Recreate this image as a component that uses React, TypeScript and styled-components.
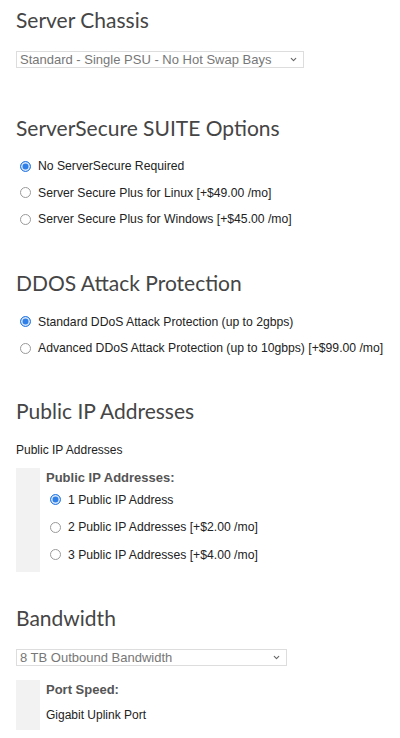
import React from "react";
import styled, { createGlobalStyle } from "styled-components";
import { ChevronDown } from "lucide-react";

const GlobalStyle = createGlobalStyle`
    html, body {
        margin: 0;
        padding: 0;
        background: #fff;
    }
    body {
        font-family: "Liberation Sans", Arial, sans-serif;
        color: #222;
    }
`;

const Page = styled.div`
    padding: 0 16px;
    width: 400px;
    box-sizing: border-box;
`;

const Section = styled.section<{ $top: number }>`
    margin-top: ${({ $top }) => $top}px;
`;

const Heading = styled.h3<{ $gap: number }>`
    font-family: Lato, "Open Sans", sans-serif;
    font-weight: 400;
    font-size: 21px;
    line-height: 24px;
    color: #454545;
    margin: 0 0 ${({ $gap }) => $gap}px;
`;

const SelectWrap = styled.div<{ $width: number }>`
    position: relative;
    width: ${({ $width }) => $width}px;
`;

const Select = styled.select`
    appearance: none;
    width: 100%;
    height: 17px;
    box-sizing: border-box;
    border: 1px solid #ddd;
    border-radius: 0;
    background: #fff;
    padding: 0 0 0 3px;
    font-family: "Liberation Sans", Arial, sans-serif;
    font-size: 13px;
    line-height: 15px;
    color: #777;
    outline: none;
`;

const Chevron = styled(ChevronDown)`
    position: absolute;
    right: 6px;
    top: 5px;
    width: 9px;
    height: 9px;
    color: #666;
    pointer-events: none;
`;

const OptionRow = styled.label<{ $height: number }>`
    display: flex;
    align-items: center;
    height: ${({ $height }) => $height}px;
    padding-left: 4px;
    font-size: 12.2px;
    color: #222;
    cursor: pointer;
`;

const Radio = styled.input.attrs({ type: "radio" })`
    appearance: none;
    flex: none;
    width: 11px;
    height: 11px;
    margin: 0 7px 0 0;
    border: 1px solid #9a9a9a;
    border-radius: 50%;
    background: #fff;
    box-sizing: border-box;

    &:checked {
        border-color: #2f7fe8;
        background: #2f7fe8;
        box-shadow: inset 0 0 0 1.5px #dbe8fb;
    }
`;

const Caption = styled.div<{ $gap: number }>`
    font-size: 12px;
    line-height: 16px;
    color: #222;
    margin-bottom: ${({ $gap }) => $gap}px;
`;

const Panel = styled.div<{ $pt: number; $pb: number; $mt?: number }>`
    border-left: 24px solid #f2f2f2;
    margin-top: ${({ $mt }) => $mt ?? 0}px;
    padding: ${({ $pt, $pb }) => `${$pt}px 0 ${$pb}px 6px`};
`;

const PanelTitle = styled.div`
    font-size: 13px;
    line-height: 16px;
    font-weight: 700;
    color: #555;
`;

const PanelText = styled.div`
    font-size: 12px;
    line-height: 16px;
    color: #222;
    margin-top: 9px;
`;

type RadioGroupProps = {
    name: string;
    options: string[];
    rowHeight: number;
};

const RadioGroup = ({ name, options, rowHeight }: RadioGroupProps) => (
    <div>
        {options.map((opt, i) => (
            <OptionRow key={opt} $height={rowHeight}>
                <Radio name={name} defaultChecked={i === 0} />
                {opt}
            </OptionRow>
        ))}
    </div>
);

export default function App() {
    return (
        <Page>
            <GlobalStyle />
            <Section $top={8}>
                <Heading $gap={18}>Server Chassis</Heading>
                <SelectWrap $width={288}>
                    <Select defaultValue="std">
                        <option value="std">Standard - Single PSU - No Hot Swap Bays</option>
                    </Select>
                    <Chevron strokeWidth={3} />
                </SelectWrap>
            </Section>

            <Section $top={48}>
                <Heading $gap={13}>ServerSecure SUITE Options</Heading>
                <RadioGroup
                    name="secure"
                    rowHeight={26.5}
                    options={[
                        "No ServerSecure Required",
                        "Server Secure Plus for Linux [+$49.00 /mo]",
                        "Server Secure Plus for Windows [+$45.00 /mo]",
                    ]}
                />
            </Section>

            <Section $top={38.5}>
                <Heading $gap={13.5}>DDOS Attack Protection</Heading>
                <RadioGroup
                    name="ddos"
                    rowHeight={26.5}
                    options={[
                        "Standard DDoS Attack Protection (up to 2gbps)",
                        "Advanced DDoS Attack Protection (up to 10gbps) [+$99.00 /mo]",
                    ]}
                />
            </Section>

            <Section $top={37}>
                <Heading $gap={19.5}>Public IP Addresses</Heading>
                <Caption $gap={10}>Public IP Addresses</Caption>
                <Panel $pt={2} $pb={3}>
                    <PanelTitle>Public IP Addresses:</PanelTitle>
                    <RadioGroup
                        name="ips"
                        rowHeight={27.5}
                        options={[
                            "1 Public IP Address",
                            "2 Public IP Addresses [+$2.00 /mo]",
                            "3 Public IP Addresses [+$4.00 /mo]",
                        ]}
                    />
                </Panel>
            </Section>

            <Section $top={34.5}>
                <Heading $gap={17.5}>Bandwidth</Heading>
                <SelectWrap $width={271}>
                    <Select defaultValue="8tb">
                        <option value="8tb">8 TB Outbound Bandwidth</option>
                    </Select>
                    <Chevron strokeWidth={3} />
                </SelectWrap>
                <Panel $pt={2} $pb={7} $mt={14}>
                    <PanelTitle>Port Speed:</PanelTitle>
                    <PanelText>Gigabit Uplink Port</PanelText>
                </Panel>
            </Section>
        </Page>
    );
}
